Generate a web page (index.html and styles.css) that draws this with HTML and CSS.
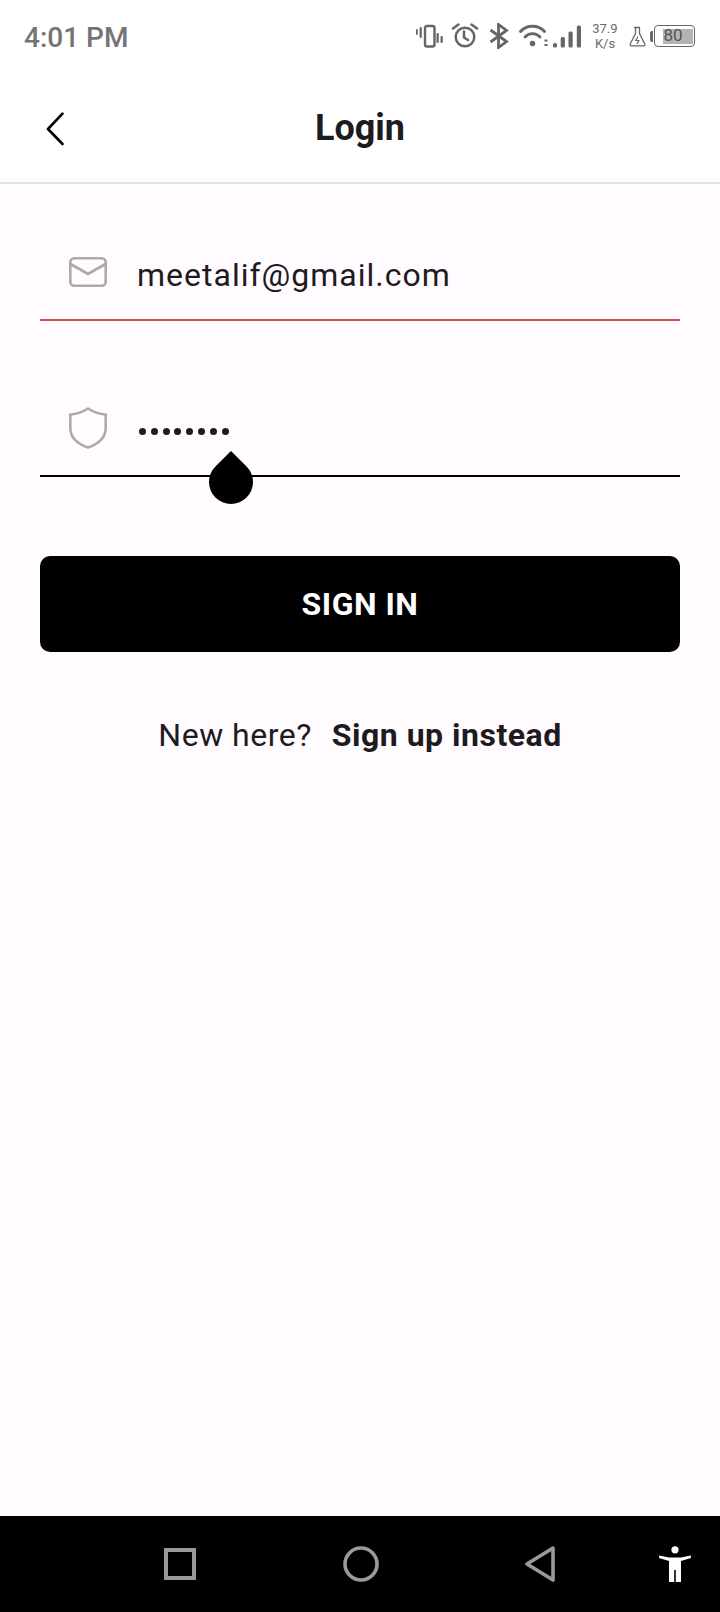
FILE: index.html
```html
<!DOCTYPE html>
<html lang="en">
<head>
<meta charset="utf-8">
<title>Login</title>
<link rel="stylesheet" href="styles.css">
</head>
<body>
<div class="screen">
  <header class="status">
    <span class="time">4:01 PM</span>
    <div class="status-icons">
      <svg width="28" height="24" viewBox="0 0 28 24"><rect x="10" y="2" width="9.500" height="20.500" rx="2" fill="none" stroke="#666" stroke-width="2.400"/><g fill="#666"><rect x="1" y="5" width="1.800" height="6" rx="0.900"/><rect x="4.600" y="3" width="2.200" height="11" rx="1"/><rect x="21.500" y="9" width="2.300" height="10" rx="1"/><rect x="25.500" y="12" width="2.300" height="7" rx="1"/></g></svg>
      <svg class="ic-alarm" width="28" height="26" viewBox="0 0 28 26"><g fill="none" stroke="#666" stroke-width="2.500" stroke-linecap="round"><circle cx="14" cy="14" r="9.300"/><path d="M13 8.500v6l4 2.500"/><path d="M2 5.500 7.500 1.500M26 5.500 20.500 1.500"/></g></svg>
      <svg class="ic-bt" width="20" height="26" viewBox="0 0 20 26"><path d="M1.500 7 17.500 18.500 9.500 24.500V1.500L17.500 7.500 1.500 19" fill="none" stroke="#666" stroke-width="2.800"/></svg>
      <svg class="ic-wifi" width="29" height="24" viewBox="0 0 29 24"><g fill="none" stroke="#666" stroke-width="2.800" stroke-linecap="round"><path d="M1.500 7.500C7.500 0.500 19.500 0.500 25.500 7.500"/><path d="M6 13C10 8.500 17 8.500 21 13"/></g><circle cx="13.500" cy="19.500" r="2.700" fill="#666"/><path d="M25.500 16.500h3M25.500 21h3" stroke="#666" stroke-width="1.800"/></svg>
      <svg class="ic-sig" width="29" height="24" viewBox="0 0 29 24"><g fill="#666"><rect x="1" y="19" width="4" height="4.500" rx="1.500"/><rect x="8.700" y="13" width="4.200" height="10.500" rx="1.500"/><rect x="16.500" y="7.500" width="4.200" height="16" rx="1.500"/><rect x="24.800" y="1.500" width="4.200" height="22" rx="1.500"/></g></svg>
      <div class="speed"><span>37.9</span><span>K/s</span></div>
      <svg class="ic-flask" width="17" height="21" viewBox="0 0 17 21"><path d="M5 1.500h6M6.500 1.500v6L1.200 18a1.200 1.200 0 0 0 1 1.800h12.600a1.200 1.200 0 0 0 1-1.800L10.500 7.500v-6" fill="none" stroke="#666" stroke-width="1.300"/><path d="M9 10.500 6.800 14.500h3L8 18" fill="none" stroke="#666" stroke-width="1.200"/></svg>
      <div class="battery">
        <i class="batt-cap"></i>
        <div class="batt-body"><div class="batt-fill"></div><span class="batt-num">80</span></div>
      </div>
    </div>
  </header>

  <nav class="appbar">
    <svg class="back" width="20" height="34" viewBox="0 0 20 34"><path d="M17.500 1.700 3 17l14.500 15" fill="none" stroke="#000" stroke-width="2.600" stroke-linecap="round" stroke-linejoin="round"/></svg>
    <h1 class="title">Login</h1>
  </nav>

  <main class="content">
    <div class="field field-error">
      <svg class="field-icon icon-mail" width="38" height="30" viewBox="0 0 38 30"><g fill="none" stroke="#aaa" stroke-width="2.600"><rect x="1.300" y="1.300" width="35.400" height="27.400" rx="4"/><path d="M1.500 7 19 17 36.500 7"/></g></svg>
      <span class="field-text">meetalif@gmail.com</span>
    </div>
    <div class="field field-active">
      <svg class="field-icon icon-shield" width="38" height="42" viewBox="0 0 38 42"><path d="M19 1.500C25 5.500 30 7 36.700 7.500V21C36.700 31 29 37 19 40.500 9 37 1.300 31 1.300 21V7.500C8 7 13 5.500 19 1.500Z" fill="none" stroke="#aaa" stroke-width="2.600" stroke-linejoin="round"/></svg>
      <span class="dots"><i></i><i></i><i></i><i></i><i></i><i></i><i></i><i></i></span>
      <span class="handle"></span>
    </div>
    <button class="signin" type="button">SIGN IN</button>
    <p class="switch"><span>New here?</span><strong>Sign up instead</strong></p>
  </main>

  <footer class="navbar">
    <div class="nav-keys">
      <svg width="32" height="32" viewBox="0 0 32 32"><rect x="2" y="2" width="28" height="28" fill="none" stroke="#9a9a9a" stroke-width="4"/></svg>
      <svg width="36" height="36" viewBox="0 0 36 36"><circle cx="18" cy="18" r="16" fill="none" stroke="#9a9a9a" stroke-width="3.600"/></svg>
      <svg width="30" height="36" viewBox="0 0 30 36"><path d="M28 2 2 18l26 16Z" fill="none" stroke="#9a9a9a" stroke-width="3.600" stroke-linejoin="round"/></svg>
    </div>
    <svg class="a11y" width="32" height="36" viewBox="0 0 32 36"><circle cx="16" cy="3.800" r="3.600" fill="#fff"/><path d="M.3 9.500 10 11.500h12l9.700-2 .3 2.500-10 3V36h-5.200V24h-1.600V36H10V15L0 12Z" fill="#fff"/></svg>
  </footer>
</div>
</body>
</html>
```

FILE: styles.css
```css
* { box-sizing: border-box; }
html, body { margin: 0; padding: 0; }
body { font-family: Roboto, "Liberation Sans", sans-serif; background: #fffbfe; }
.screen { width: 720px; height: 1612px; display: flex; flex-direction: column; background: #fffbfe; }

.status { height: 74px; flex: none; background: #fff; display: flex; align-items: center; justify-content: space-between; padding: 0 25px 0 24px; }
.time { font-size: 28px; color: #747474; font-weight: 500; }
.status-icons { display: flex; align-items: center; margin-bottom: 2px; }
.ic-alarm { margin-left: 8px; }
.ic-bt { margin-left: 10px; }
.ic-wifi { margin-left: 10px; }
.ic-sig { margin-left: 4px; }
.speed { width: 28px; margin-left: 10px; display: flex; flex-direction: column; align-items: center; font-size: 13px; line-height: 15px; color: #6b6b6b; }
.ic-flask { margin-left: 10px; }
.battery { margin-left: 4px; display: flex; align-items: center; }
.batt-cap { width: 3px; height: 11px; background: #666; border-radius: 2px 0 0 2px; margin-right: 1px; }
.batt-body { position: relative; width: 41px; height: 22px; border: 1.500px solid #666; border-radius: 4px; display: flex; align-items: center; padding: 2.500px 1px; }
.batt-fill { margin-left: 6.500px; width: 30px; height: 100%; background: #b4b4b4; }
.batt-num { position: absolute; left: 8.500px; top: 0; font-size: 17px; line-height: 19px; color: #555; }

.appbar { height: 110px; flex: none; background: #fff; border-bottom: 2px solid #e2e0e2; display: flex; align-items: center; justify-content: center; position: relative; }
.back { position: absolute; left: 45px; top: 38px; }
.title { margin: 0; font-size: 36px; font-weight: 700; color: #1d1b1e; }

.content { flex: 1; padding: 0 40px; display: flex; flex-direction: column; }
.field { position: relative; height: 82px; display: flex; align-items: center; padding: 0 0 8px 29px; border-bottom: 2px solid #000; }
.field-error { margin-top: 55px; border-bottom-color: #c65a50; }
.field-active { margin-top: 74px; }
.field-icon { flex: none; }
.icon-mail { margin-bottom: 6px; }
.icon-shield { margin-bottom: 7px; }
.field-text { margin-left: 30px; font-size: 32px; letter-spacing: 1px; color: #1d1b1e; }
.dots { display: flex; gap: 4.800px; margin-left: 32px; }
.dots i { width: 7px; height: 7px; border-radius: 50%; background: #1d1b1e; }
.handle { position: absolute; left: 169px; bottom: -29px; width: 44px; height: 44px; background: #000; border-radius: 0 50% 50% 50%; transform: rotate(45deg); }

.signin { margin-top: 79px; height: 96px; border: 0; border-radius: 10px; background: #000; color: #fff; font: 700 32px Roboto, sans-serif; letter-spacing: 0.500px; }
.switch { margin: 63px 0 0; display: flex; justify-content: center; gap: 20px; font-size: 32px; line-height: 40px; color: #1d1b1e; letter-spacing: 0.500px; }
.switch strong { font-weight: 700; }

.navbar { height: 96px; flex: none; background: #000; position: relative; display: flex; align-items: center; justify-content: center; }
.nav-keys { width: 391px; margin-right: 1px; display: flex; align-items: center; justify-content: space-between; }
.a11y { position: absolute; left: 659px; top: 30px; }
```
